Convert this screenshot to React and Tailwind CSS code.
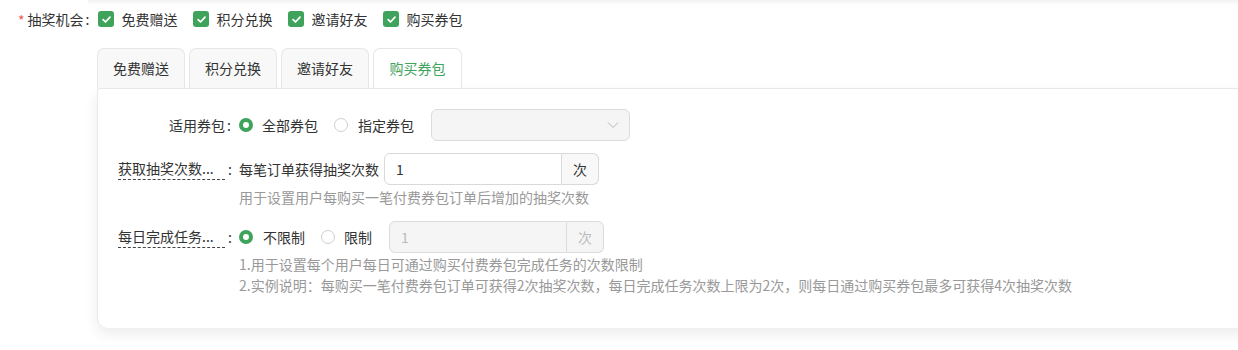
import React from "react";

function Check() {
  return (
    <span className="w-[16px] h-[16px] rounded-[3px] bg-[#3fa35c] flex items-center justify-center shrink-0">
      <svg width="11" height="11" viewBox="0 0 12 12" fill="none">
        <path d="M2.3 6.2 L4.9 8.7 L9.8 3.4" stroke="white" strokeWidth="1.9" strokeLinecap="round" strokeLinejoin="round" />
      </svg>
    </span>
  );
}

function Radio({ checked }) {
  return checked ? (
    <span className="w-[14px] h-[14px] rounded-full border-[4px] border-[#3fa35c] bg-white shrink-0" />
  ) : (
    <span className="w-[14px] h-[14px] rounded-full border border-[#cfcfcf] bg-white shrink-0" />
  );
}

function Label({ text, trunc }) {
  if (!trunc) {
    return (
      <div className="w-[141px] shrink-0 flex justify-end pr-[8px] text-[#333]">
        <span>{text}</span>
        <span className="ml-[2px]">:</span>
      </div>
    );
  }
  return (
    <div className="w-[141px] shrink-0 flex items-center pl-[20px] text-[#333]">
      <span className="w-[107px] leading-[20px] pb-[1px] border-b border-dashed border-[#444] whitespace-nowrap overflow-hidden">{text}</span>
      <span className="ml-[3px]">:</span>
    </div>
  );
}

export default function App() {
  const tabs = ["免费赠送", "积分兑换", "邀请好友", "购买券包"];
  return (
    <div className="w-[1238px] h-[350px] bg-white overflow-hidden text-[14px] text-[#333] font-['Noto_Sans_CJK_SC','Liberation_Sans',sans-serif]">
      <div className="ml-[88px] h-[5px] bg-gradient-to-b from-[#f2f2f2] to-white" />
      <div className="h-[28px] flex items-center pl-[18px]">
        <span className="text-[#f0564a] mr-[3px] mt-[2px]">*</span>
        <span>抽奖机会</span>
        <span className="ml-[2px]">:</span>
        <div className="flex items-center ml-[9px] gap-[16px]">
          {tabs.map((t) => (
            <div key={t} className="flex items-center gap-[7px]">
              <Check />
              <span>{t}</span>
            </div>
          ))}
        </div>
      </div>

      <div className="flex ml-[97px] mt-[15px] gap-[4px] h-[40px]">
        {tabs.map((t, i) => (
          <div
            key={t}
            className={
              i === 3
                ? "w-[89px] flex items-center justify-center rounded-t-[7px] border border-b-0 border-[#e6e6e6] bg-white text-[#3fa35c]"
                : "w-[88px] flex items-center justify-center rounded-t-[7px] border border-b-0 border-[#e6e6e6] bg-[#f8f8f8]"
            }
          >
            {t}
          </div>
        ))}
      </div>

      <div className="ml-[97px] w-[1200px] bg-white border-t border-l border-[#e8e8e8] rounded-bl-[10px] rounded-tl-[3px] shadow-[0_6px_14px_rgba(0,0,0,0.08)] pt-[20px] pb-[32px]">
        <div className="flex items-center h-[32px]">
          <Label text="适用券包" />
          <div className="flex items-center gap-[9px]">
            <Radio checked />
            <span>全部券包</span>
          </div>
          <div className="flex items-center gap-[10px] ml-[16px]">
            <Radio />
            <span>指定券包</span>
          </div>
          <div className="ml-[17px] w-[199px] h-[32px] rounded-[6px] border border-[#dcdcdc] bg-[#f5f5f5] flex items-center justify-end pr-[10px]">
            <svg width="12" height="8" viewBox="0 0 12 8" fill="none">
              <path d="M1 1.5 L6 6.5 L11 1.5" stroke="#b8b8b8" strokeWidth="1" />
            </svg>
          </div>
        </div>

        <div className="flex items-center h-[32px] mt-[12px]">
          <Label text="获取抽奖次数..." trunc />
          <span>每笔订单获得抽奖次数</span>
          <div className="ml-[5px] flex h-[32px]">
            <div className="w-[178px] border border-[#d9d9d9] rounded-l-[6px] flex items-center pl-[11px]">1</div>
            <div className="w-[37px] border border-l-0 border-[#d9d9d9] rounded-r-[6px] bg-[#f8f8f8] flex items-center justify-center">次</div>
          </div>
        </div>
        <div className="pl-[141px] mt-[2px] leading-[20px] text-[#999]">用于设置用户每购买一笔付费券包订单后增加的抽奖次数</div>

        <div className="flex items-center h-[32px] mt-[14px]">
          <Label text="每日完成任务..." trunc />
          <div className="flex items-center gap-[10px]">
            <Radio checked />
            <span>不限制</span>
          </div>
          <div className="flex items-center gap-[9px] ml-[16px]">
            <Radio />
            <span>限制</span>
          </div>
          <div className="ml-[17px] flex h-[32px] text-[#bbb]">
            <div className="w-[178px] border border-[#dcdcdc] rounded-l-[6px] bg-[#f5f5f5] flex items-center pl-[11px]">1</div>
            <div className="w-[37px] border border-l-0 border-[#dcdcdc] rounded-r-[6px] bg-[#f5f5f5] flex items-center justify-center">次</div>
          </div>
        </div>
        <div className="pl-[141px] mt-[1px] leading-[21px] text-[#999]">
          <div>1.用于设置每个用户每日可通过购买付费券包完成任务的次数限制</div>
          <div>2.实例说明：每购买一笔付费券包订单可获得2次抽奖次数，每日完成任务次数上限为2次，则每日通过购买券包最多可获得4次抽奖次数</div>
        </div>
      </div>
    </div>
  );
}
